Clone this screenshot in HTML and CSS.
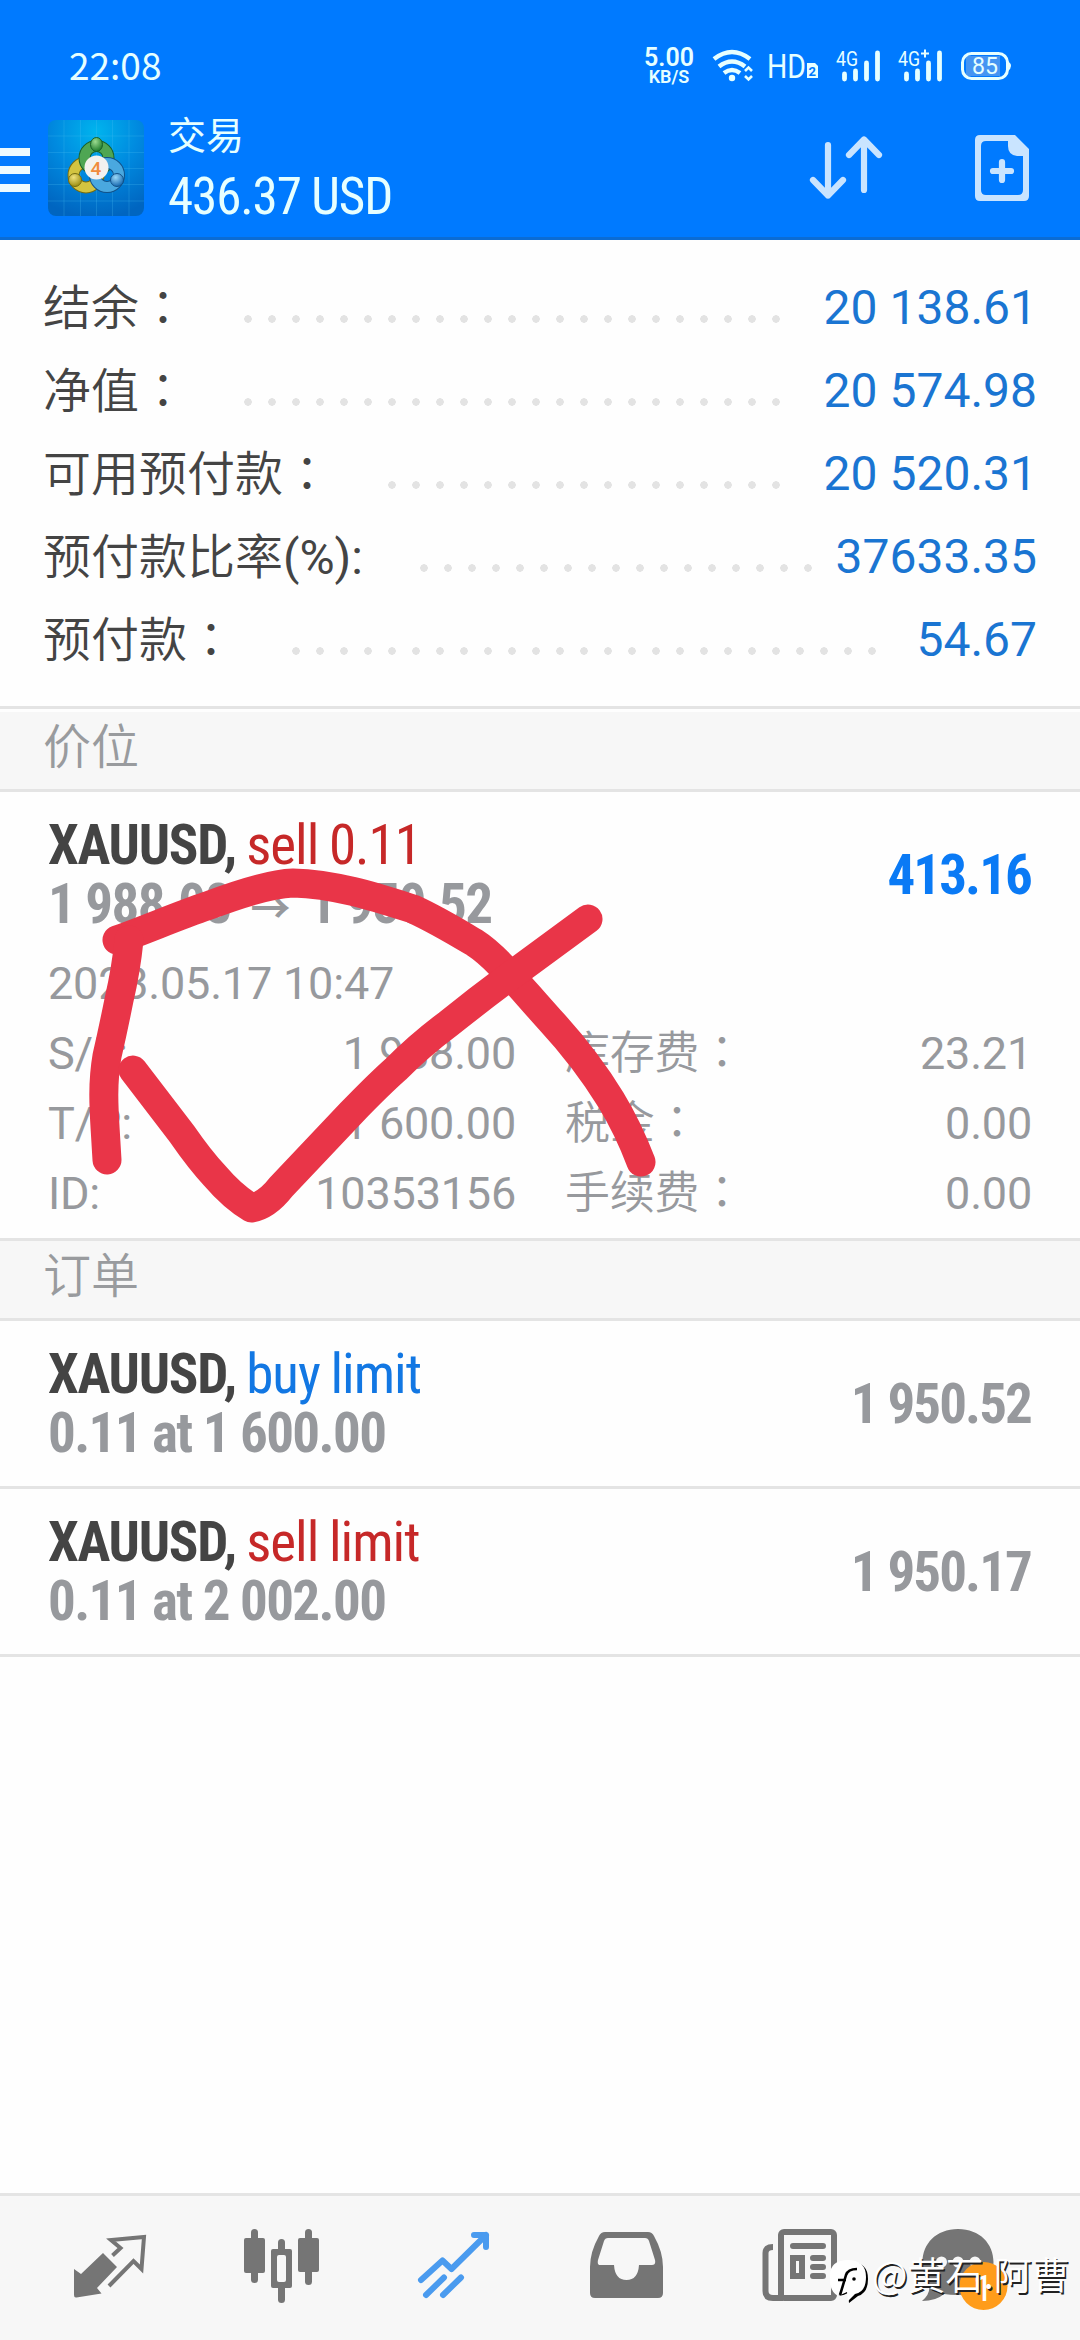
FILE: index.html
```html
<!DOCTYPE html>
<html lang="zh-CN">
<head>
<meta charset="UTF-8">
<meta name="viewport" content="width=device-width, initial-scale=1.0">
<title>交易</title>
<link rel="stylesheet" href="styles.css">
</head>
<body>
<div class="screen">
  <header>
    <div class="status">
      <span class="clock">22:08</span>
      <div class="speed"><b>5.00</b><span>KB/S</span></div>
      <svg class="status-icons" width="380" height="50" viewBox="700 40 380 50">
        <g fill="none" stroke="#e6ffff" stroke-width="4.5">
          <path d="M714 59 Q732 45 750 59"/>
          <path d="M719 66.500 Q732 56.500 745 66.500"/>
          <path d="M724 73 Q732 67 740 73"/>
        </g>
        <circle cx="732" cy="78" r="3.200" fill="#e6ffff"/>
        <path d="M745 71 l3.500 -3.500 l3.500 3.500 M745 76 l3.500 3.500 l3.500 -3.500" fill="none" stroke="#e6ffff" stroke-width="2.600"/>
        <text x="767" y="78" font-size="34" textLength="39" lengthAdjust="spacingAndGlyphs">HD</text>
        <path d="M807 63 h8 l3 3 v12 h-11z" fill="#e6ffff"/>
        <text class="sim" x="808.500" y="76" font-size="13">2</text>
        <text x="836" y="66" font-size="21" textLength="22" lengthAdjust="spacingAndGlyphs">4G</text>
        <text x="898" y="66" font-size="21" textLength="22" lengthAdjust="spacingAndGlyphs">4G</text>
        <path d="M921 53.500 h8 M925 49.500 v8" stroke="#e6ffff" stroke-width="2"/>
        <g stroke="#e6ffff" stroke-width="4.800" stroke-linecap="round">
          <path d="M844.500 74 v5 M855.500 71 v8 M866.500 63 v16 M877.500 53 v26"/>
          <path d="M906.500 74 v5 M917.500 71 v8 M928.500 63 v16 M939.500 53 v26"/>
        </g>
        <rect x="966" y="56" width="34" height="20" fill="#4595f2"/>
        <rect x="962.500" y="53.500" width="45" height="25" rx="9" fill="none" stroke="#e6ffff" stroke-width="3"/>
        <path d="M1008 61 q6 5 0 10z" fill="#e6ffff"/>
        <text x="972" y="74" font-size="23" textLength="26" lengthAdjust="spacingAndGlyphs">85</text>
      </svg>
    </div>
    <div class="bar">
      <div class="burger"><i></i><i></i><i></i></div>
      <svg class="logo" width="96" height="96" viewBox="0 0 96 96">
        <defs>
          <radialGradient id="sky" cx="50%" cy="12%" r="90%">
            <stop offset="0" stop-color="#00b4ee"/><stop offset=".5" stop-color="#0089df"/><stop offset="1" stop-color="#0065c0"/>
          </radialGradient>
          <radialGradient id="green" cx="40%" cy="30%" r="70%"><stop offset="0" stop-color="#9bdb90"/><stop offset="1" stop-color="#1f7c2c"/></radialGradient>
          <radialGradient id="gold" cx="40%" cy="30%" r="70%"><stop offset="0" stop-color="#f0e27c"/><stop offset="1" stop-color="#9c8e13"/></radialGradient>
          <radialGradient id="blue" cx="40%" cy="30%" r="70%"><stop offset="0" stop-color="#9ad8f8"/><stop offset="1" stop-color="#1769b0"/></radialGradient>
        </defs>
        <rect width="96" height="96" rx="8" fill="url(#sky)"/>
        <path d="M16 0V96M32.500 0V96M48.500 0V96M64.500 0V96M81 0V96M0 16H96M0 32.500H96M0 48.500H96M0 64.500H96M0 81H96" stroke="#4cc0f2" stroke-opacity=".25" fill="none"/>
        <circle cx="38" cy="55" r="12.500" fill="none" stroke="#756c10" stroke-width="12"/>
        <circle cx="38" cy="55" r="12.500" fill="none" stroke="#d3c440" stroke-width="10"/>
        <circle cx="48.500" cy="38" r="12" fill="none" stroke="#19602a" stroke-width="12"/>
        <circle cx="48.500" cy="38" r="12" fill="none" stroke="#4fa653" stroke-width="10"/>
        <circle cx="59" cy="55" r="12" fill="none" stroke="#125188" stroke-width="12"/>
        <circle cx="59" cy="55" r="12" fill="none" stroke="#4aa8df" stroke-width="10"/>
        <ellipse cx="48.500" cy="24.500" rx="6" ry="7" fill="url(#green)" stroke="#19602a"/>
        <circle cx="27" cy="60" r="6.500" fill="url(#gold)" stroke="#756c10"/>
        <circle cx="69" cy="60" r="6.500" fill="url(#blue)" stroke="#125188"/>
        <circle cx="48.500" cy="47.500" r="12" fill="#f3f2ef"/>
        <text class="four" x="48" y="54.500" text-anchor="middle">4</text>
      </svg>
      <div class="title">
        <div class="name">交易</div>
        <div class="profit">436.37 USD</div>
      </div>
      <svg class="actions" width="280" height="90" viewBox="800 120 280 90">
        <g fill="none" stroke="#c9e4ff" stroke-width="6.200" stroke-linecap="round" stroke-linejoin="round">
          <path d="M828 145 V195.500 M813 180 L828 195.500 L843 180"/>
          <path d="M864 190 V139.500 M849 155 L864 139.500 L879 155"/>
          <path d="M993 171 H1011 M1002 162 V180"/>
        </g>
        <path fill="#c9e4ff" fill-rule="evenodd" d="M980 135 H1015 L1029 149 V196 Q1029 201 1024 201 H980 Q975 201 975 196 V140 Q975 135 980 135Z M986 141 Q981 141 981 146 V190 Q981 195 986 195 H1018 Q1023 195 1023 190 V156 H1017 Q1008 155 1008 146 V141Z"/>
      </svg>
    </div>
  </header>

  <section class="summary">
    <div class="row"><span>结余<em lang="zh-TW">：</em></span><i class="dots" style="width:552px"></i><b>20 138.61</b></div>
    <div class="row"><span>净值<em lang="zh-TW">：</em></span><i class="dots" style="width:552px"></i><b>20 574.98</b></div>
    <div class="row"><span>可用预付款<em lang="zh-TW">：</em></span><i class="dots" style="width:408px"></i><b>20 520.31</b></div>
    <div class="row"><span>预付款比率<u>(%):</u></span><i class="dots" style="width:408px"></i><b>37633.35</b></div>
    <div class="row"><span>预付款<em lang="zh-TW">：</em></span><i class="dots" style="width:600px"></i><b>54.67</b></div>
  </section>

  <h2 class="first">价位</h2>
  <section class="position">
    <div class="deal">
      <div>
        <p class="symbol">XAUUSD, <span class="sell">sell 0.11</span></p>
        <p class="price">1 988.08 <span class="arrow">→</span> 1 950.52</p>
      </div>
      <div class="value gain">413.16</div>
    </div>
    <div class="details">
      <p class="date">2023.05.17 10:47</p>
      <p>S/L:</p><p class="num">1 988.00</p><p class="fee">库存费<em lang="zh-TW">：</em></p><p class="num">23.21</p>
      <p>T/P:</p><p class="num">1 600.00</p><p class="fee">税金<em lang="zh-TW">：</em></p><p class="num">0.00</p>
      <p>ID:</p><p class="num">10353156</p><p class="fee">手续费<em lang="zh-TW">：</em></p><p class="num">0.00</p>
    </div>
    <!-- red marker over the position -->
    <svg class="marker" width="1080" height="445" viewBox="0 792 1080 445">
      <g fill="none" stroke="#e93548" stroke-width="29" stroke-linecap="round" stroke-linejoin="round">
        <path d="M117 940 C150 928 180 915 207 906 Q265 884 293 883 C335 884 375 897 413 909 C437 920 455 931 475 943 C497 957 520 987 550 1020 C575 1047 595 1074 611 1100 Q628 1128 641 1162"/>
        <path d="M129 940 Q126 970 119 1000 Q113 1030 107 1056 C102 1085 104 1110 105.500 1135 L107 1160"/>
        <path d="M133 1070 L182 1134 Q200 1160 215 1176 Q233 1197 251.500 1208 Q267 1205 281 1187 L351 1113 Q378 1085 396 1069 Q420 1045 448 1024 Q478 1000 509 977 L588 919"/>
      </g>
    </svg>
  </section>

  <h2>订单</h2>
  <section class="order">
    <div>
      <p class="symbol">XAUUSD, <span class="buy">buy limit</span></p>
      <p class="price">0.11 at 1 600.00</p>
    </div>
    <div class="value">1 950.52</div>
  </section>
  <section class="order">
    <div>
      <p class="symbol">XAUUSD, <span class="sell">sell limit</span></p>
      <p class="price">0.11 at 2 002.00</p>
    </div>
    <div class="value">1 950.17</div>
  </section>

  <nav>
    <svg viewBox="24 16 172 144">
      <path d="M74 89 L81 94 L103 73 L117 87 L97 108 L101.500 113.500 L76.500 117.500 Q74 118 74 115Z"/>
      <path class="line" d="M112.500 75.500 L120.500 68 L111 60 L144 57 L141.500 89 L133.500 81 L109 106"/>
    </svg>
    <svg viewBox="196 16 172 144">
      <rect x="244" y="58" width="21" height="35" rx="2"/><rect x="251" y="49" width="7" height="54" rx="3.500"/>
      <rect x="278" y="59" width="7" height="64" rx="3.500"/><rect x="271" y="69" width="21" height="39" rx="2"/>
      <rect x="277" y="75" width="9" height="27" rx="2" fill="#f7f7f7"/>
      <rect x="298" y="58" width="21" height="34" rx="2"/><rect x="305" y="49" width="7" height="56" rx="3.500"/>
    </svg>
    <svg viewBox="368 16 172 144">
      <g class="active">
        <path d="M421 100 L442.500 80.500 L451.500 89 L486 55 M474 55 H486 V67"/>
        <path d="M426 115 L444 97.500 M443 115 L461 97.500"/>
      </g>
    </svg>
    <svg viewBox="540 16 172 144">
      <path fill-rule="evenodd" d="M605 52 H648 Q652 52 654 56 Q663 72 663 87 V113 Q663 118 658 118 H595 Q590 118 590 113 V87 Q590 72 599 56 Q601 52 605 52Z M608 58 Q605 58 604 61 L598 80 Q597 85 600 85 H614 Q615 100 626.500 100 Q638 100 639 85 H652 Q656 85 655 80 L649 61 Q648 58 645 58Z"/>
    </svg>
    <svg viewBox="712 16 172 144">
      <g fill="none" stroke="#757575" stroke-width="6">
        <rect x="781" y="52" width="53" height="66" rx="3"/>
        <path d="M773 67 Q765.500 67 765.500 73 V111 Q765.500 118 773 118 H783"/>
        <path d="M793 66 H823 M813 78 H823 M813 87 H823 M813 96 H823" stroke-linecap="round"/>
        <rect x="793" y="78" width="9" height="18"/>
      </g>
    </svg>
    <svg viewBox="884 16 172 144">
      <path d="M958 49 C980 49 993.500 64 993.500 82 C993.500 102 979 115 958 115 Q950 115 944 114 Q936 121 922 121 Q931 113 929 105 Q922.500 95 922.500 82 C922.500 64 936 49 958 49Z"/>
      <g fill="#f7f7f7"><circle cx="941.500" cy="82" r="5.500"/><circle cx="958" cy="82" r="5.500"/><circle cx="975" cy="82" r="5.500"/></g>
      <circle cx="983.500" cy="106" r="24" fill="#ff9c1b"/>
      <text x="973" y="121" font-size="37" class="badge">1</text>
    </svg>
    <div class="watermark">
      <svg width="42" height="46" viewBox="828 78 42 46">
        <path fill="#000" d="M850 83 Q868 83 868 100 Q868 114 858 117 L849 124 L848 114 Q838 119 836 114 L840 101Z"/>
        <path fill="#fff" d="M830 98 Q829 82 847 81 Q866 81 866 98 Q866 113 855 115 L848 122 L847 113 L838 117 Q829 112 830 98Z"/>
        <path d="M838 101 H846 M840 116 Q844 103 846 96 Q848 90 857 90" fill="none" stroke="#000" stroke-width="2.600"/>
        <circle cx="854" cy="100" r="1.800"/>
      </svg>
      <span>@黄石.阿曹</span>
    </div>
  </nav>
</div>
</body>
</html>
```
FILE: styles.css
```css
* {
margin: 0;
padding: 0;
box-sizing: border-box;
}
body {
font-family: Roboto, "Noto Sans CJK SC", sans-serif;
background: #fefefe;
color: #444;
}
i, em {
font-style: normal;
}
em {
font-family: "Noto Sans CJK TC", sans-serif;
line-height: 1px;
}
u {
font-weight: 400;
text-decoration: none;
}
.screen {
width: 1080px;
height: 2340px;
display: flex;
flex-direction: column;
overflow: hidden;
}
header {
height: 240px;
background: #007aff;
border-bottom: 3px solid #0b6cd4;
color: #e6ffff;
}
.status {
height: 100px;
padding: 40px 0 0 69px;
display: flex;
align-items: flex-start;
}
.clock {
width: 572px;
font: 37px/48px "Noto Sans CJK SC", sans-serif;
}
.speed {
width: 56px;
margin-right: 3px;
padding-top: 5px;
display: flex;
flex-direction: column;
align-items: center;
}
.speed b {
font-size: 25px;
line-height: 25px;
font-weight: 600;
}
.speed span {
font-size: 18px;
line-height: 14px;
font-weight: 600;
}
.status-icons text {
fill: #e6ffff;
}
.status-icons .sim {
fill: #007aff;
font-weight: 700;
}
.bar {
height: 137px;
display: flex;
}
.burger {
width: 30px;
margin: 48px 18px 0 0;
}
.burger i {
display: block;
height: 8px;
margin-bottom: 10px;
background: #ecfaff;
}
.logo {
margin-top: 20px;
}
.four {
font-size: 19px;
font-weight: 500;
fill: #f08c3c;
}
.title {
flex: 1;
padding: 11px 0 0 24px;
}
.name {
font-size: 38px;
line-height: 50px;
}
.profit {
margin-top: 6px;
font-size: 51px;
line-height: 60px;
font-stretch: 75%;
letter-spacing: -1.1px;
white-space: nowrap;
}
.actions {
margin-top: 20px;
}
.summary {
height: 469px;
padding: 26px 43px 0;
border-bottom: 3px solid #e4e4e4;
font-size: 48px;
}
.row {
display: flex;
height: 83px;
line-height: 83px;
white-space: nowrap;
}
.row span {
font-weight: 350;
line-height: 85px;
}
.row b {
margin-left: auto;
font-weight: 400;
color: #1a75d2;
}
.dots {
margin-left: 49px;
background: radial-gradient(circle at 12px 53px, #e3e3e3 3.500px, transparent 4px) 0 0 / 24px 83px;
}
h2 {
height: 80px;
padding-left: 43px;
background: #f7f7f7;
border-bottom: 3px solid #e4e4e4;
font-size: 48px;
line-height: 71px;
font-weight: 350;
color: #999b9e;
}
h2.first {
margin-top: 3px;
}
.position {
position: relative;
height: 449px;
border-bottom: 3px solid #e4e4e4;
}
.deal, .order {
display: flex;
justify-content: space-between;
padding: 24px 49px 0 48px;
font-size: 55px;
font-stretch: 75%;
font-weight: 700;
line-height: 59px;
letter-spacing: -1.6px;
white-space: nowrap;
}
.order {
height: 168px;
border-bottom: 3px solid #e4e4e4;
}
.symbol {
letter-spacing: -1.3px;
word-spacing: -1px;
}
.symbol span {
font-weight: 400;
letter-spacing: -1px;
}
.sell {
color: #c62828;
}
.buy {
color: #1277e3;
}
.price {
color: #97999d;
}
.arrow {
display: inline-block;
width: 56px;
font-size: 40px;
text-align: center;
}
.value {
padding-top: 30px;
letter-spacing: -1.9px;
color: #97999d;
}
.gain {
color: #0a7af5;
}
.details {
display: grid;
grid-template-columns: 100px 368px 280px 1fr;
grid-auto-rows: 70px;
padding: 10px 48px 0;
font-size: 45px;
line-height: 70px;
letter-spacing: -0.2px;
color: #97999d;
}
.date {
grid-column: 1 / 5;
}
.num {
text-align: right;
}
.fee {
padding-left: 49px;
font-weight: 350;
white-space: nowrap;
}
.marker {
position: absolute;
left: 0;
top: 0;
}
nav {
position: relative;
height: 147px;
margin-top: auto;
padding: 0 24px;
display: flex;
background: #f7f7f7;
border-top: 3px solid #e4e4e4;
}
nav > svg {
width: 172px;
height: 144px;
fill: #757575;
}
.line {
fill: none;
stroke: #757575;
stroke-width: 4;
}
.active {
fill: none;
stroke: #4a9bef;
stroke-width: 6;
stroke-linecap: round;
stroke-linejoin: round;
}
.badge {
fill: #fff;
}
/* signature over the last two tabs */
.watermark {
position: absolute;
left: 828px;
top: 61px;
display: flex;
gap: 2px;
color: #fff;
font: 350 38px/32px "Noto Sans CJK SC", sans-serif;
text-shadow: 1.5px 1.5px 0 #222;
white-space: nowrap;
}
```
